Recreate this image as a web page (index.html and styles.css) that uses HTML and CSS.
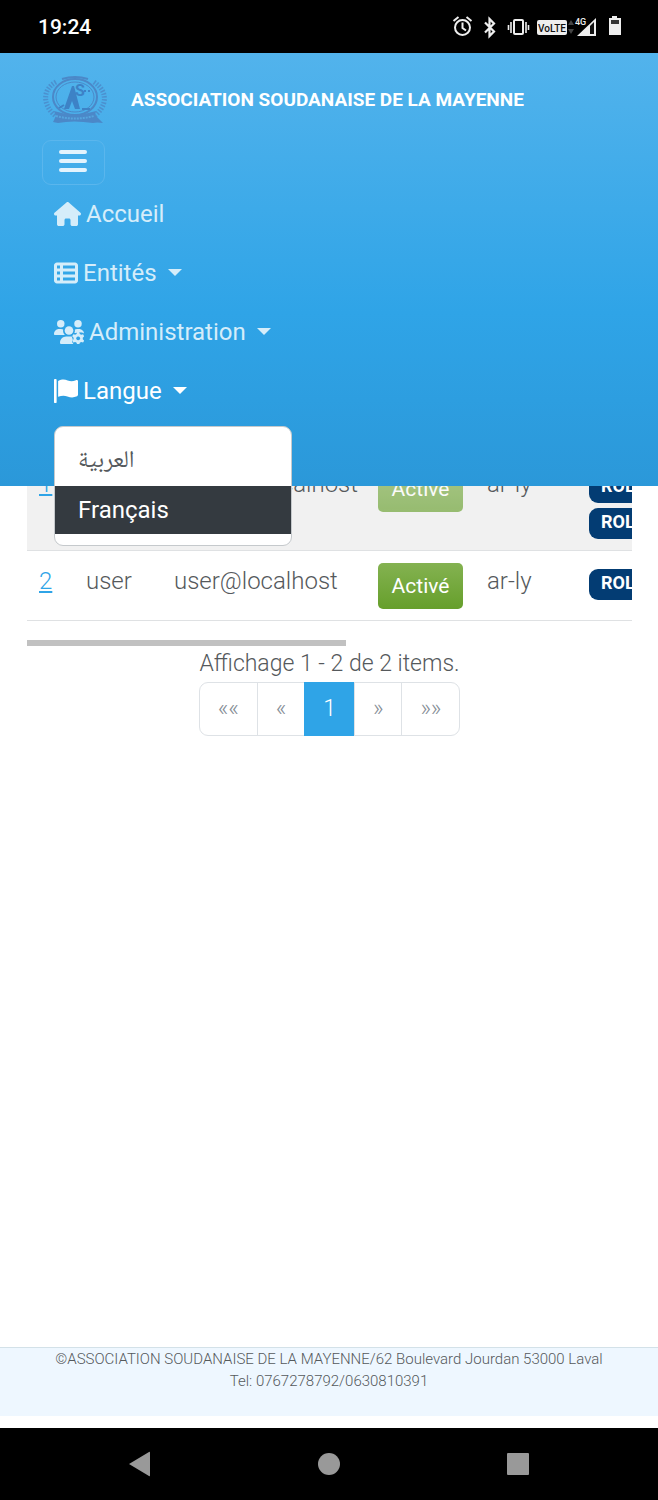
FILE: index.html
```
<!DOCTYPE html>
<html lang="fr">
<head>
<meta charset="utf-8">
<meta name="viewport" content="width=device-width, initial-scale=1">
<title>Association Soudanaise de la Mayenne</title>
<link rel="stylesheet" href="styles.css">
</head>
<body>
<div class="status-bar">
  <span class="clock">19:24</span>
  <svg class="status-icons" width="172" height="30" viewBox="0 0 172 30" aria-hidden="true">
    <g fill="none" stroke="#eee" stroke-width="2">
      <circle cx="12.500" cy="15.500" r="7.500"/>
      <path d="M12.500 10.500v5.500l3.500 2.500M3.500 9l5-4M21.500 9l-5-4"/>
      <path d="M35 10.500l9 9-4.500 4.500v-17l4.500 4.500-9 9" stroke-width="2.200"/>
      <rect x="64" y="8" width="9" height="14" rx="1"/>
      <path d="M61 10v11M76 10v11M58.500 13v5M78.500 13v5" stroke-width="1.600"/>
    </g>
    <rect x="87" y="8" width="30" height="15" rx="2" fill="#eee"/>
    <text x="102" y="20" class="volte" text-anchor="middle">VoLTE</text>
    <path d="M118 13l3-5 3 5zM118 17l3 5 3-5z" fill="#444"/>
    <text x="125" y="13" class="network">4G</text>
    <path d="M127 24L146 6v18z" fill="#eee"/>
    <path d="M140 14l4-4v12h-4z" fill="#111"/>
    <path d="M162 4h5v2h4v17h-12V6h3z" fill="#eee"/>
    <path d="M161 8h8v4h-8z" fill="#333"/>
  </svg>
</div>
<header class="navbar">
  <a class="brand" href="#">
    <svg class="logo" width="66" height="50" viewBox="0 0 66 50" aria-hidden="true">
      <g fill="none" stroke="#4b88c8">
        <ellipse cx="33" cy="22" rx="22" ry="18" stroke-width="2"/>
        <ellipse cx="33" cy="22" rx="19" ry="15"/>
        <path d="M14 7C-1 15 1 32 15 42M52 7c15 10 13 25-1 35" stroke-width="5" stroke-dasharray="1.500 1.500" opacity=".8"/>
        <path d="M20 4Q33 0 46 4" stroke-width="2"/>
      </g>
      <path d="M12 36q21 7 42 0l-1 4 8 8q-6-1-10 0-20-3-35 0l-5-1 3-6z" fill="#4b88c8"/>
      <path d="M14 41q19 5 38 0" fill="none" stroke="#55a5de" stroke-width="2" stroke-dasharray="2 1"/>
      <path d="M22 34l8-23 2 0 6 23h-5l-3-8-3 8z" fill="#3d82c6"/>
      <text x="33" y="21" class="logo-letter">S</text>
      <path d="M42 16h2M46 16h2M17 33l5-3M40 34h8" stroke="#3d82c6" stroke-width="2"/>
    </svg>
    <span>ASSOCIATION SOUDANAISE DE LA MAYENNE</span>
  </a>
  <button class="toggler" type="button" aria-label="Menu">
    <svg width="28" height="24" viewBox="0 0 28 24"><path d="M2 3h24M2 12h24M2 21h24" stroke="#e3f3fd" stroke-width="4" stroke-linecap="round"/></svg>
  </button>
  <nav class="menu">
    <a class="nav-link" href="#">
      <svg width="27" height="24" viewBox="0 0 576 512"><path d="M575.8 255.500c0 18-15 32.100-32 32.100h-32l.7 160.200c0 2.700-.2 5.400-.5 8.100V472c0 22.100-17.900 40-40 40H392c-22.100 0-40-17.900-40-40V384c0-17.700-14.300-32-32-32H256c-17.700 0-32 14.300-32 32v88c0 22.100-17.900 40-40 40H104c-22.100 0-40-17.900-40-40V287.600H32c-18 0-32-14-32-32.100 0-9 3-17 10-24L266.400 8c7-7 15-8 22-8s15 2 21 7L564.800 231.500c8 7 12 15 11 24z"/></svg>
      <span>Accueil</span>
    </a>
    <a class="nav-link dropdown" href="#">
      <svg width="24" height="24" viewBox="0 0 512 512"><path fill-rule="evenodd" d="M0 96C0 60.700 28.700 32 64 32H448c35.300 0 64 28.700 64 64V416c0 35.300-28.700 64-64 64H64c-35.300 0-64-28.700-64-64V96zm64 0v64h64V96H64zm384 0H192v64H448V96zM64 224v64h64V224H64zm384 0H192v64H448V224zM64 352v64h64V352H64zm384 0H192v64H448V352z"/></svg>
      <span>Entités</span>
    </a>
    <a class="nav-link dropdown" href="#">
      <svg width="30" height="24" viewBox="0 0 640 512">
        <circle cx="144" cy="80" r="80"/><circle cx="512" cy="80" r="80"/><circle cx="320" cy="224" r="92"/>
        <path d="M0 299c0-59 48-107 107-107h43c16 0 31 4 45 10-9 47 6 91 40 118H21c-12 0-21-9-21-21z"/>
        <path d="M445 202c14-6 29-10 45-10h43c59 0 107 48 107 96-30-24-55-20-70-20-60-20-80 10-135 10 11-23 15-49 10-76z"/>
        <path d="M128 485c0-74 60-133 133-133h118l22 65-18 45 30 50H155c-15 0-27-12-27-27z"/>
        <path fill-rule="evenodd" d="M492 258h48l10 42 30 16 40-12 24 42-30 30v34l30 30-24 42-40-12-30 16-10 34h-48l-10-34-30-16-40 12-24-42 30-30v-34l-30-30 24-42 40 12 30-16zM516 350a42 42 0 1 0 .1 0z"/>
      </svg>
      <span>Administration</span>
    </a>
    <div class="language">
      <a class="nav-link dropdown active" href="#" aria-expanded="true">
        <svg width="24" height="24" viewBox="0 0 512 512"><path d="M0 24a28 28 0 0 1 56 0v464a28 28 0 0 1-56 0zM88 40c84-36 140-34 204-8 64 24 112 22 176-8 20-8 44 2 44 26v288c0 14-8 24-20 30-74 32-132 32-206 4-66-22-120-20-198 8z"/></svg>
        <span>Langue</span>
      </a>
      <div class="language-menu">
        <button type="button" class="language-item arabic" lang="ar">العربية</button>
        <button type="button" class="language-item selected">Français</button>
      </div>
    </div>
  </nav>
</header>
<main>
  <div class="table-scroll">
    <table class="users">
      <colgroup><col class="col-id"><col class="col-login"><col class="col-email"><col class="col-state"><col class="col-lang"><col class="col-roles"></colgroup>
      <tbody>
        <tr class="odd">
          <td><a href="#">1</a></td><td>admin</td><td>admin@localhost</td>
          <td><button class="state" type="button" disabled>Activé</button></td><td>ar-ly</td>
          <td><div class="roles"><span class="badge">ROLE_USER</span><span class="badge">ROLE_ADMIN</span></div></td>
        </tr>
        <tr>
          <td><a href="#">2</a></td><td>user</td><td>user@localhost</td>
          <td><button class="state" type="button">Activé</button></td><td>ar-ly</td>
          <td><div class="roles"><span class="badge">ROLE_USER</span></div></td>
        </tr>
      </tbody>
    </table>
    <div class="scrollbar"></div>
  </div>
  <div class="summary">Affichage 1 - 2 de 2 items.</div>
  <nav class="pagination" aria-label="Pagination">
    <a href="#">««</a><a href="#">«</a><a class="current" href="#">1</a><a href="#">»</a><a href="#">»»</a>
  </nav>
</main>
<footer>
  <div>©ASSOCIATION SOUDANAISE DE LA MAYENNE/62 Boulevard Jourdan 53000 Laval</div>
  <div>Tel: 0767278792/0630810391</div>
</footer>
<div class="system-bar">
  <button type="button" aria-label="Retour"><svg width="26" height="26" viewBox="0 0 26 26"><path d="M2 13L22 1q1-1 1 1v22q0 2-1 1z"/></svg></button>
  <button type="button" aria-label="Accueil"><svg width="26" height="26" viewBox="0 0 26 26"><circle cx="13" cy="13" r="11"/></svg></button>
  <button type="button" aria-label="Applications"><svg width="26" height="26" viewBox="0 0 26 26"><rect x="2" y="2" width="22" height="22" rx="1"/></svg></button>
</div>
</body>
</html>
```
FILE: styles.css
```
* { box-sizing: border-box; }
body {
  margin: 0;
  min-height: 100vh;
  display: flex;
  flex-direction: column;
  background: #fff;
  color: #55595c;
  font: 300 24px/36px Roboto, sans-serif;
}
button { font: inherit; border: 0; background: none; padding: 0; }
.status-bar {
  height: 53px;
  padding: 0 36px 0 38px;
  display: flex;
  align-items: center;
  justify-content: space-between;
  background: #000;
  color: #fff;
}
.clock { font-size: 21px; font-weight: 500; }
.volte { font: 500 10px Roboto, sans-serif; fill: #111; }
.network { font: 500 9px Roboto, sans-serif; fill: #eee; }

.navbar {
  position: relative;
  z-index: 1;
  padding: 21px 42px 66px;
  background: linear-gradient(#52b3ec, #2fa4e7 60%, #2b98d9);
}
.brand {
  display: flex;
  align-items: center;
  gap: 23px;
  height: 52px;
  color: #fff;
  font-size: 19px;
  font-weight: 700;
  text-decoration: none;
}
.logo { flex: none; }
.logo-letter { font: 700 16px Roboto, sans-serif; fill: #3d82c6; }
.toggler {
  display: grid;
  place-items: center;
  width: 63px;
  height: 45px;
  margin-top: 14px;
  padding: 0 2px 3px 0;
  border: 1px solid #5ab6ed;
  border-radius: 9px;
}
.menu { margin-top: -1px; padding-left: 12px; }
.nav-link {
  display: flex;
  align-items: center;
  gap: 5px;
  height: 59px;
  color: #d5edfa;
  font-weight: 400;
  text-decoration: none;
}
.nav-link svg { fill: currentColor; }
.dropdown::after {
  content: "";
  margin-left: 6px;
  border: 7px solid transparent;
  border-top-color: currentColor;
  border-bottom: 0;
}
.nav-link.active { color: #fff; }
.language { position: relative; }
.language-menu {
  position: absolute;
  top: 100%;
  left: 0;
  width: 238px;
  margin-top: 6px;
  padding: 11px 0;
  border: 1px solid #c5c9cc;
  border-radius: 9px;
  background: #fff;
}
.language-item {
  display: block;
  width: 100%;
  height: 48px;
  padding: 0 23px;
  color: #55595c;
  font-weight: 400;
  text-align: left;
}
.arabic { font-family: "Noto Naskh Arabic", "Noto Sans Arabic", "DejaVu Sans", sans-serif; }
.selected { background: #343a40; color: #fff; }

main { flex: 1; padding: 0 26px 0 27px; }
/* The list is scrolled partly beneath the navigation bar. */
.table-scroll { margin-top: -32px; overflow: hidden; }
.users { width: 720px; table-layout: fixed; border-collapse: separate; border-spacing: 0; }
.col-id { width: 47px; }
.col-login { width: 88px; }
.col-email { width: 204px; }
.col-state { width: 109px; }
.col-lang { width: 102px; }
.users td { padding: 12px 12px 11px; border-bottom: 1px solid #dfe1e3; vertical-align: top; }
.odd td { background: #f1f1f1; }
.users a { color: #2fa4e7; text-decoration: underline; }
.state {
  display: block;
  width: 85px;
  height: 46px;
  border-radius: 5px;
  background: linear-gradient(#84b251, #669f2b);
  color: #fff;
  font-size: 21px;
  font-weight: 400;
}
.state:disabled { opacity: .65; }
.roles { display: flex; flex-direction: column; align-items: flex-start; gap: 5px; padding-top: 6px; }
.badge {
  height: 31px;
  padding: 0 12px;
  border-radius: 9px;
  background: #033c73;
  color: #fff;
  font-size: 18px;
  font-weight: 700;
  line-height: 28px;
}
.scrollbar { width: 319px; height: 6px; margin-top: 19px; background: #c1c1c1; max-width: 100%; }
.summary { font-size: 23px; text-align: center; }
.pagination {
  display: flex;
  width: fit-content;
  margin: 0 auto;
  border: 1px solid #dee2e6;
  border-radius: 9px;
  font-size: 23px;
}
.pagination a { padding: 8px 18px; color: #868e96; text-decoration: none; }
.pagination a + a { border-left: 1px solid #dee2e6; }
.pagination .current { margin: -1px 0; padding: 9px 18px; background: #2fa4e7; border-color: #2fa4e7; color: #fff; }

footer {
  height: 69px;
  margin-bottom: 12px;
  border-top: 1px solid #d3e1e8;
  background: #eef7ff;
  font-size: 15px;
  line-height: 22px;
  text-align: center;
}
.system-bar {
  height: 72px;
  padding: 0 45px;
  display: grid;
  grid-template-columns: repeat(3, 1fr);
  place-items: center;
  background: #000;
}
.system-bar button { display: flex; }
.system-bar svg { fill: #999; }
```
